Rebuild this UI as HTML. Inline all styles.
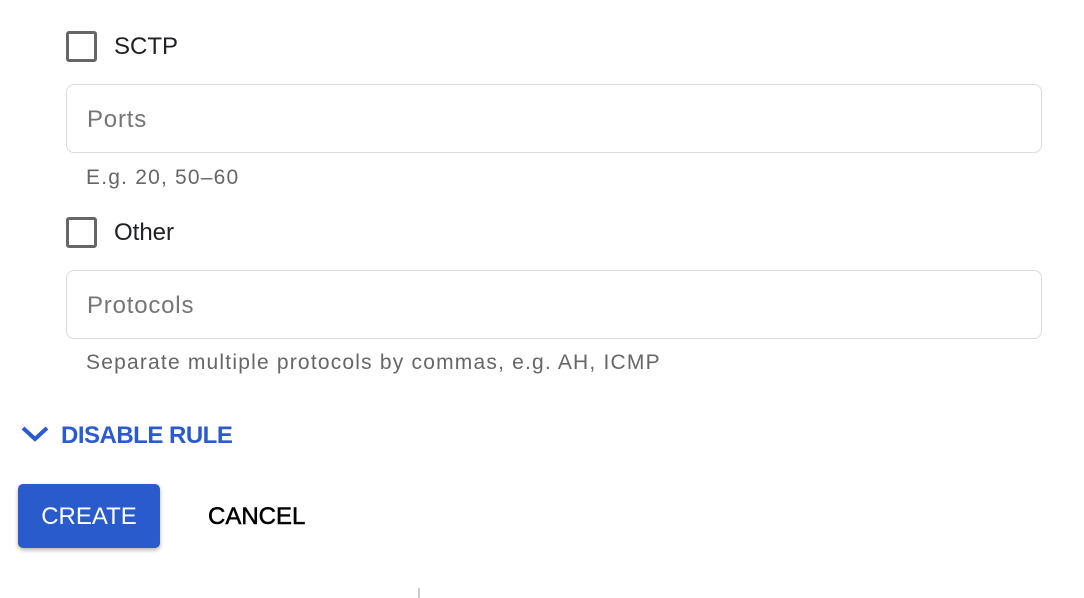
<!DOCTYPE html>
<html><head><style>
body{margin:0;width:1084px;height:598px;background:#fff;font-family:"Liberation Sans",sans-serif;position:relative;overflow:hidden}
.cb{position:absolute;left:66px;width:25px;height:25px;border:3.5px solid #666;border-radius:3px}
.lbl{position:absolute;left:114px;font-size:24px;color:#202124;line-height:30px}
.inp{position:absolute;left:66px;width:974px;height:67px;border:1.5px solid #dadce0;border-radius:8px}
.inp span{position:absolute;left:20px;top:20px;font-size:24px;color:#757575;line-height:30px;letter-spacing:0.8px}
.help{position:absolute;left:86px;font-size:21px;color:#666;line-height:26px;letter-spacing:1.2px}
</style></head><body>
<div class="cb" style="top:31px"></div><div class="lbl" style="top:32px">SCTP</div>
<div class="inp" style="top:84px"><span>Ports</span></div>
<div class="help" style="top:165px">E.g. 20, 50–60</div>
<div class="cb" style="top:217px"></div><div class="lbl" style="top:218px">Other</div>
<div class="inp" style="top:270px"><span>Protocols</span></div>
<div class="help" style="top:350px">Separate multiple protocols by commas, e.g. AH, ICMP</div>
<svg style="position:absolute;left:20px;top:424px" width="30" height="20" viewBox="0 0 30 20"><path d="M3 4 L15 15 L27 4" fill="none" stroke="#2a5bd0" stroke-width="4"/></svg>
<div style="position:absolute;left:61px;top:421px;font-size:24px;font-weight:bold;color:#2a5bd0;line-height:30px;letter-spacing:-0.5px">DISABLE RULE</div>
<div style="position:absolute;left:18px;top:484px;width:142px;height:64px;background:#295bcd;border-radius:5px;box-shadow:0 2px 4px rgba(0,0,0,.3);color:#fff;font-size:24px;line-height:66px;text-align:center">CREATE</div>
<div style="position:absolute;left:208px;top:485px;line-height:64px;font-size:24px;color:#000;-webkit-text-stroke:0.5px #000">CANCEL</div>
<div style="position:absolute;left:418px;top:588px;width:2px;height:10px;background:#ccc"></div>
</body></html>
